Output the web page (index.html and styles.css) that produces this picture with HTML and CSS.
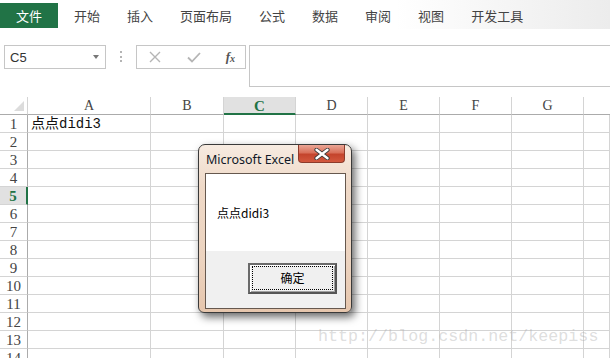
FILE: index.html
```html
<!DOCTYPE html>
<html lang="zh-CN">
<head>
  <meta charset="UTF-8" />
  <title>Microsoft Excel</title>
  <link rel="stylesheet" href="styles.css">
</head>
<body>

  <div class="ribbon">
    <div class="tab file">文件</div>
    <div class="tab">开始</div>
    <div class="tab">插入</div>
    <div class="tab">页面布局</div>
    <div class="tab">公式</div>
    <div class="tab">数据</div>
    <div class="tab">审阅</div>
    <div class="tab">视图</div>
    <div class="tab">开发工具</div>
  </div>

  <div class="toolbar">
    <div class="namebox">
      <span>C5</span>
      <span class="caret"></span>
    </div>
    <div class="grip"><i></i><i></i><i></i></div>
    <div class="fxbox">
      <svg width="14" height="14" viewBox="0 0 14 14"><path d="M2 2 L12 12 M12 2 L2 12" stroke="#b5b5b5" stroke-width="1.4" fill="none"/></svg>
      <svg width="16" height="14" viewBox="0 0 16 14"><path d="M2 7.5 L6 11.5 L14 3" stroke="#b5b5b5" stroke-width="1.8" fill="none"/></svg>
      <span class="fx">f<sub>x</sub></span>
    </div>
    <div class="formula"></div>
  </div>

  <div class="sheet">
    <div class="rh corner"><span class="tri"></span></div><div class="ch">A</div><div class="ch">B</div><div class="ch active">C</div><div class="ch">D</div><div class="ch">E</div><div class="ch">F</div><div class="ch">G</div><div class="ch last"></div>

    <div class="rh">1</div><div class="cell text">点点didi3</div><div class="cell"></div><div class="cell"></div><div class="cell"></div><div class="cell"></div><div class="cell"></div><div class="cell"></div><div class="cell"></div>
    <div class="rh">2</div><div class="cell"></div><div class="cell"></div><div class="cell"></div><div class="cell"></div><div class="cell"></div><div class="cell"></div><div class="cell"></div><div class="cell"></div>
    <div class="rh">3</div><div class="cell"></div><div class="cell"></div><div class="cell"></div><div class="cell"></div><div class="cell"></div><div class="cell"></div><div class="cell"></div><div class="cell"></div>
    <div class="rh">4</div><div class="cell"></div><div class="cell"></div><div class="cell"></div><div class="cell"></div><div class="cell"></div><div class="cell"></div><div class="cell"></div><div class="cell"></div>
    <div class="rh active">5</div><div class="cell"></div><div class="cell"></div><div class="cell"></div><div class="cell"></div><div class="cell"></div><div class="cell"></div><div class="cell"></div><div class="cell"></div>
    <div class="rh">6</div><div class="cell"></div><div class="cell"></div><div class="cell"></div><div class="cell"></div><div class="cell"></div><div class="cell"></div><div class="cell"></div><div class="cell"></div>
    <div class="rh">7</div><div class="cell"></div><div class="cell"></div><div class="cell"></div><div class="cell"></div><div class="cell"></div><div class="cell"></div><div class="cell"></div><div class="cell"></div>
    <div class="rh">8</div><div class="cell"></div><div class="cell"></div><div class="cell"></div><div class="cell"></div><div class="cell"></div><div class="cell"></div><div class="cell"></div><div class="cell"></div>
    <div class="rh">9</div><div class="cell"></div><div class="cell"></div><div class="cell"></div><div class="cell"></div><div class="cell"></div><div class="cell"></div><div class="cell"></div><div class="cell"></div>
    <div class="rh">10</div><div class="cell"></div><div class="cell"></div><div class="cell"></div><div class="cell"></div><div class="cell"></div><div class="cell"></div><div class="cell"></div><div class="cell"></div>
    <div class="rh">11</div><div class="cell"></div><div class="cell"></div><div class="cell"></div><div class="cell"></div><div class="cell"></div><div class="cell"></div><div class="cell"></div><div class="cell"></div>
    <div class="rh">12</div><div class="cell"></div><div class="cell"></div><div class="cell"></div><div class="cell"></div><div class="cell"></div><div class="cell"></div><div class="cell"></div><div class="cell"></div>
    <div class="rh">13</div><div class="cell"></div><div class="cell"></div><div class="cell"></div><div class="cell"></div><div class="cell"></div><div class="cell"></div><div class="cell"></div><div class="cell"></div>
    <div class="rh">14</div><div class="cell"></div><div class="cell"></div><div class="cell"></div><div class="cell"></div><div class="cell"></div><div class="cell"></div><div class="cell"></div><div class="cell"></div>
  </div>

  <!-- message box -->
  <div class="dialog">
    <div class="titlebar">Microsoft Excel</div>
    <div class="close">
      <svg width="18" height="12" viewBox="0 0 18 12"><path d="M3.5 1.8 L14.5 10.2 M14.5 1.8 L3.5 10.2" stroke="#3a3a3a" stroke-width="4.2" stroke-linecap="round" fill="none"/><path d="M3.5 1.8 L14.5 10.2 M14.5 1.8 L3.5 10.2" stroke="#fff" stroke-width="2.4" stroke-linecap="round" fill="none"/></svg>
    </div>
    <div class="client">
      <div class="message">点点didi3</div>
      <div class="actions">
        <button class="ok"><span>确定</span></button>
      </div>
    </div>
  </div>

  <div class="watermark">http://blog.csdn.net/keepiss</div>

</body>
</html>
```

FILE: styles.css
```css
body {
  margin: 0;
  padding: 0;
  width: 610px;
  height: 358px;
  overflow: hidden;
  background: #ffffff;
  font-family: "Noto Sans CJK SC", "Noto Sans", sans-serif;
  position: relative;
}

/* ribbon tabs */
.ribbon {
  display: flex;
  height: 29px;
  background: linear-gradient(to right, #ffffff 65%, #f4f4f4 85%, #ececec);
}

.tab {
  margin-top: 3px;
  height: 25px;
  line-height: 25px;
  padding: 0 13.5px;
  font-size: 13px;
  color: #444;
}

.tab.file {
  padding: 0 16px;
  background-color: #217346;
  color: #ffffff;
}

.tab.file + .tab {
  padding-left: 16px;
}

/* name box + formula bar */
.toolbar {
  display: flex;
  align-items: flex-start;
  padding: 16px 0 0 4px;
  height: 41px;
  margin-bottom: 11px;
}

.namebox {
  box-sizing: border-box;
  width: 102px;
  height: 24px;
  border: 1px solid #c6c6c6;
  display: flex;
  align-items: center;
  justify-content: space-between;
  padding: 0 6px 0 5px;
  font-family: "Liberation Sans", sans-serif;
  font-size: 13px;
  color: #333;
}

.caret {
  width: 0;
  height: 0;
  border-left: 3.5px solid transparent;
  border-right: 3.5px solid transparent;
  border-top: 4px solid #777;
}

.grip {
  width: 30px;
  display: flex;
  flex-direction: column;
  align-items: center;
  gap: 2.5px;
  padding-top: 6px;
}

.grip i {
  display: block;
  width: 2px;
  height: 2px;
  background: #b4b4b4;
}

.fxbox {
  box-sizing: border-box;
  width: 110px;
  height: 24px;
  border: 1px solid #c6c6c6;
  display: flex;
  align-items: center;
  justify-content: space-between;
  padding: 0 10px 0 11px;
}

.fx {
  font-family: "Liberation Serif", serif;
  font-style: italic;
  font-weight: bold;
  font-size: 13px;
  color: #555;
}

.fx sub {
  font-size: 10px;
  vertical-align: -1px;
}

.formula {
  flex: 1;
  margin-left: 3px;
  height: 42px;
  box-sizing: border-box;
  border: 1px solid #c6c6c6;
  border-right: none;
}

/* grid */
.sheet {
  display: grid;
  grid-template-columns: 28px 123px 73px 72px 72px 72px 72px 72px 1fr;
  grid-auto-rows: 18px;
  font-family: "Liberation Serif", "Noto Sans CJK SC", serif;
  color: #444;
}

.sheet > div {
  box-sizing: border-box;
}

.ch {
  border-right: 1px solid #d4d4d4;
  border-bottom: 1px solid #ababab;
  text-align: center;
  font-size: 14px;
  line-height: 18px;
}

.ch.last {
  border-right: none;
}

.ch.active {
  background: #e1e1e1;
  border-bottom: 2px solid #217346;
  color: #217346;
  font-weight: bold;
  font-size: 15px;
}

.rh {
  border-right: 1px solid #ababab;
  border-bottom: 1px solid #d4d4d4;
  text-align: center;
  font-size: 15px;
  line-height: 18px;
}

.rh.corner {
  border-bottom: 1px solid #ababab;
  border-right: 1px solid #d4d4d4;
  position: relative;
}

.tri {
  position: absolute;
  right: 3px;
  bottom: 3px;
  width: 0;
  height: 0;
  border-left: 10px solid transparent;
  border-bottom: 10px solid #dcdcdc;
}

.rh.active {
  background: #e1e1e1;
  border-right: 2px solid #217346;
  color: #217346;
  font-weight: bold;
  font-size: 15px;
}

.cell {
  border-right: 1px solid #d4d4d4;
  border-bottom: 1px solid #d4d4d4;
}

.cell.text {
  font-family: "Liberation Mono", "Noto Sans CJK SC", monospace;
  font-size: 14px;
  line-height: 18px;
  padding-left: 3px;
  color: #111;
  white-space: nowrap;
}

/* message box */
.dialog {
  position: absolute;
  left: 198px;
  top: 144px;
  width: 154px;
  height: 169px;
  box-sizing: border-box;
  border: 1px solid #3a3a3a;
  border-radius: 7px 7px 6px 6px;
  background: linear-gradient(#f7ebe1, #efd9c7 25%, #ecd3bf 70%, #e6c6ad);
  box-shadow: 3px 4px 8px rgba(0, 0, 0, 0.6);
  padding: 0 5px 3px 6px;
}

.titlebar {
  height: 28px;
  line-height: 28px;
  padding: 1px 0 0 1px;
  box-sizing: border-box;
  font-family: "Noto Sans", sans-serif;
  font-size: 12.5px;
  color: #101828;
}

.close {
  position: absolute;
  top: 0;
  right: 6px;
  width: 47px;
  height: 18px;
  box-sizing: border-box;
  border: 1px solid #8c3b2b;
  border-top: none;
  border-radius: 0 0 4px 4px;
  background: linear-gradient(#eaa696, #d9705a 45%, #c4442c 55%, #d3583e);
  display: flex;
  align-items: center;
  justify-content: center;
}

.client {
  height: 136px;
  box-sizing: border-box;
  border: 1px solid #66584e;
  background: #f0f0f0;
  display: flex;
  flex-direction: column;
}

.message {
  height: 77px;
  background: #ffffff;
  padding-left: 11px;
  box-sizing: border-box;
  padding-top: 30px;
  font-size: 12px;
  line-height: 18px;
  color: #000;
}

.actions {
  display: flex;
  justify-content: flex-end;
  padding: 12px 8px 0 0;
}

.ok {
  width: 89px;
  height: 31px;
  box-sizing: border-box;
  border: 2px solid #6a6a6a;
  border-right-color: #555;
  border-bottom-color: #555;
  background: #f0f0f0;
  box-shadow: inset 1px 1px #ffffff, inset -1px -1px #a0a0a0;
  padding: 1px 2px 2px 2px;
  display: flex;
}

.ok span {
  flex: 1;
  border: 1px dotted #000;
  font-family: "Noto Sans CJK SC", sans-serif;
  font-size: 12px;
  line-height: 21px;
  color: #000;
  text-align: center;
}

.watermark {
  position: absolute;
  left: 318px;
  top: 327px;
  font-family: "Liberation Mono", monospace;
  font-size: 16.7px;
  color: rgba(170, 170, 170, 0.4);
  white-space: nowrap;
}
```
